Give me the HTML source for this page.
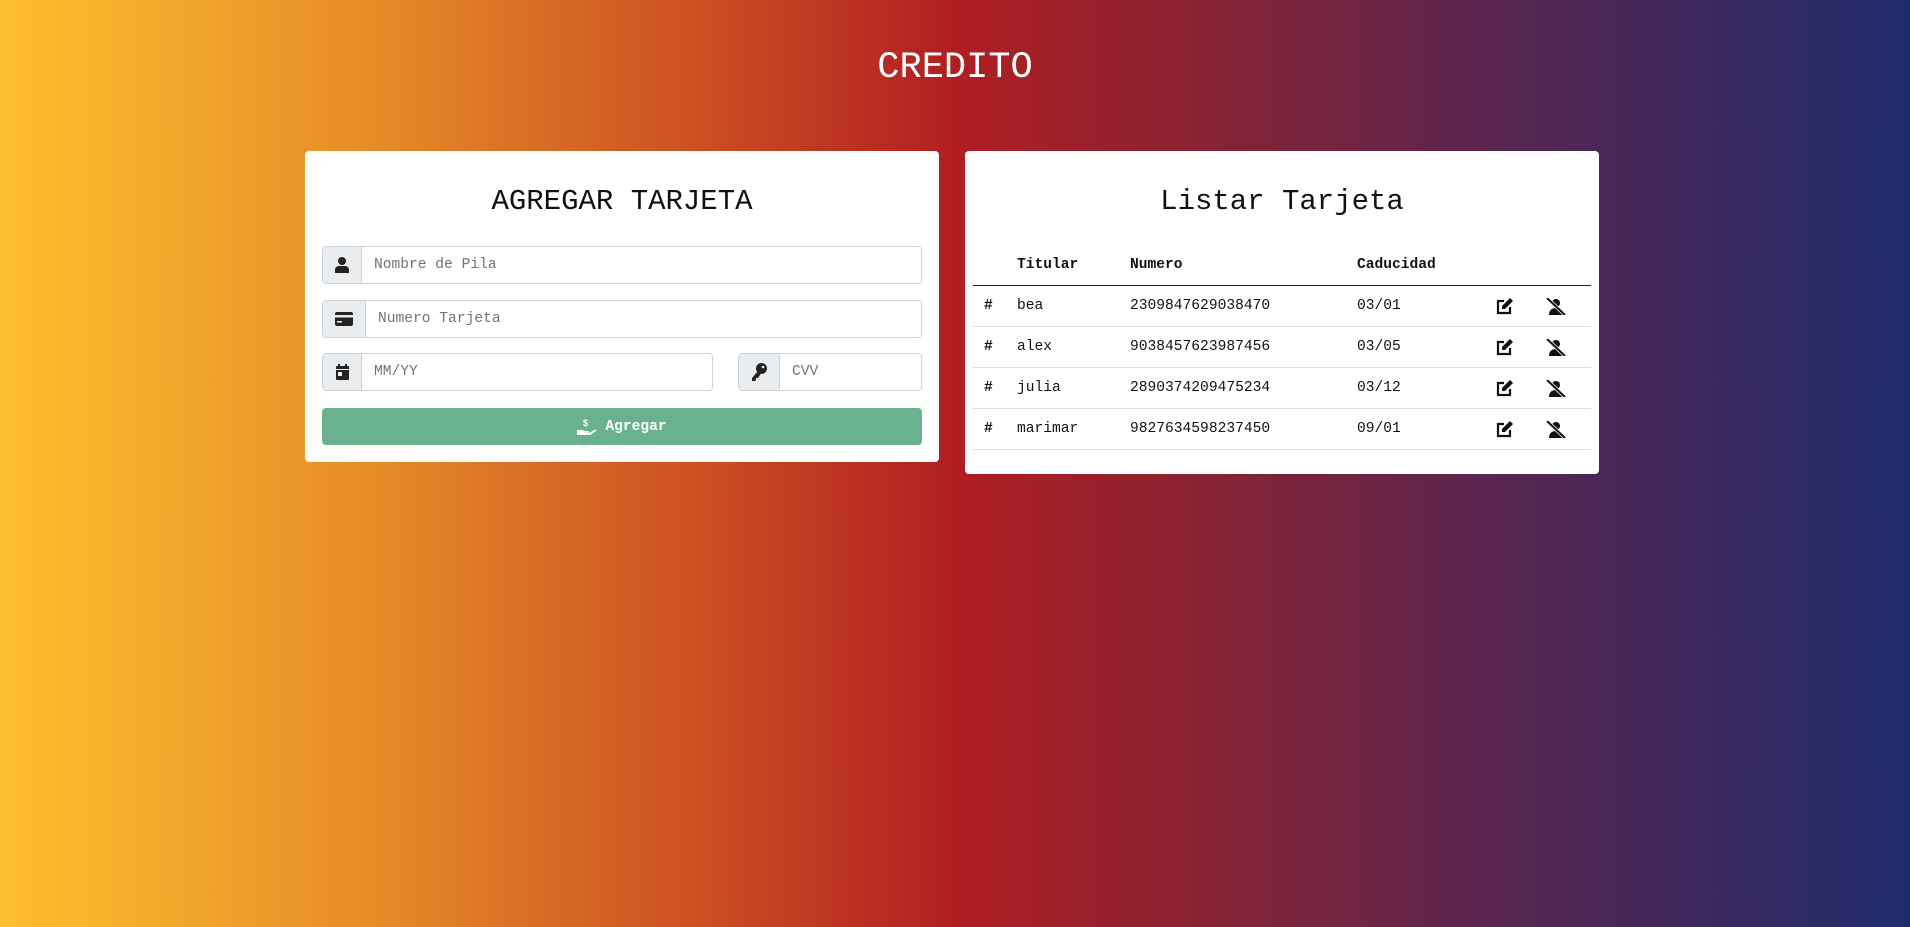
<!DOCTYPE html>
<html><head><style>
*{box-sizing:border-box;margin:0;padding:0}
body{width:1910px;height:927px;overflow:hidden;font-family:"Liberation Mono",monospace;background:linear-gradient(90deg,#fdbf2e 0%,#e58a28 20%,#c94a22 38%,#b01e22 50%,#8a2232 62%,#5a2550 78%,#1e2b6b 100%);position:relative}
h1{position:absolute;top:48px;left:0;width:1910px;text-align:center;color:#fff;font-weight:normal;font-size:37px;line-height:40px}
.card{position:absolute;background:#fff;border-radius:4px;top:151px}
.t{position:absolute;left:0;width:100%;text-align:center;font-size:29px;line-height:34px;color:#111;top:34px}
.grp{position:absolute;height:38px;border:1px solid #ced4da;border-radius:4px;display:flex;background:#fff;overflow:hidden}
.ad{width:39px;background:#e9ecef;border-right:1px solid #ced4da;display:flex;align-items:center;justify-content:center}
.ph{color:#6c757d;font-size:14.6px;line-height:36px;padding-left:12px}
.btn{position:absolute;left:17px;width:600px;top:257px;height:37px;background:#69b18f;border-radius:4px;color:#fff;font-size:14.6px;font-weight:bold;display:flex;align-items:center;justify-content:center;gap:8px}
.r{position:absolute;left:8px;width:618px;border-bottom:1px solid #ddd;height:41px;font-size:14.6px;color:#111}
.r span{position:absolute;top:12px}
.r svg{position:absolute;top:12px}
</style></head><body>
<h1>CREDITO</h1>
<div class="card" style="left:305px;width:634px;height:311px">
<div class="t">AGREGAR TARJETA</div>
<div class="grp" style="left:17px;top:95px;width:600px"><div class="ad"><svg width="14" height="16" viewBox="0 0 14 16"><circle cx="7" cy="4" r="4" fill="#222"/><path d="M0 16v-3a4 4 0 014-4h6a4 4 0 014 4v3z" fill="#222"/></svg></div><div class="ph">Nombre de Pila</div></div>
<div class="grp" style="left:17px;top:149px;width:600px"><div class="ad" style="width:43px"><svg width="18" height="14" viewBox="0 0 18 14"><rect width="18" height="14" rx="2" fill="#222"/><rect y="3" width="18" height="2.5" fill="#e9ecef"/><rect x="2" y="9" width="5" height="1.6" fill="#e9ecef"/></svg></div><div class="ph">Numero Tarjeta</div></div>
<div class="grp" style="left:17px;top:202px;width:391px"><div class="ad"><svg width="13" height="16" viewBox="0 0 13 16"><rect y="2" width="13" height="14" rx="1" fill="#222"/><rect x="2" width="2" height="3" fill="#222"/><rect x="9" width="2" height="3" fill="#222"/><rect y="5" width="13" height="1" fill="#e9ecef"/><rect x="2" y="8" width="4" height="4" fill="#e9ecef"/></svg></div><div class="ph">MM/YY</div></div>
<div class="grp" style="left:433px;top:202px;width:184px"><div class="ad" style="width:41px"><svg width="16" height="18" viewBox="0 0 16 18"><circle cx="10.5" cy="5.5" r="5.5" fill="#222"/><path d="M7 8L1 15v3h3l1-1v-2h2l4-6z" fill="#222"/><circle cx="12" cy="4" r="1.3" fill="#e9ecef"/></svg></div><div class="ph">CVV</div></div>
<div class="btn"><svg width="20" height="18" viewBox="0 0 20 18"><text x="6" y="8" font-size="9" font-weight="bold" fill="#fff" font-family="Liberation Sans">$</text><path d="M0 12h5l3 1h4v1.6H7l5 .4 6-3.5 1.5 1.2L13 17H0z" fill="#fff"/></svg>Agregar</div>
</div>
<div class="card" style="left:965px;width:634px;height:323px">
<div class="t">Listar Tarjeta</div>
<div class="r" style="top:102px;height:33px;border-bottom:1.5px solid #222;font-weight:bold"><span style="left:44px;top:4px">Titular</span><span style="left:157px;top:4px">Numero</span><span style="left:384px;top:4px">Caducidad</span></div>
<div class="r" style="top:135px"><span style="left:11px;font-weight:bold">#</span><span style="left:44px">bea</span><span style="left:157px">2309847629038470</span><span style="left:384px">03/01</span><svg style="left:523px" width="18" height="17" viewBox="0 0 18 17"><path d="M8 3H2v12h12V9" fill="none" stroke="#111" stroke-width="2.2"/><path d="M14 0l3 3-8 8H6V8z" fill="#111"/></svg><svg style="left:573px" width="20" height="17" viewBox="0 0 20 17"><circle cx="10" cy="5" r="4" fill="#111"/><path d="M3 17c0-5 3-7 7-7s7 2 7 7z" fill="#111"/><path d="M1 0l18 17" stroke="#fff" stroke-width="3.5"/><path d="M1 0l18 17" stroke="#111" stroke-width="2"/></svg></div>
<div class="r" style="top:176px"><span style="left:11px;font-weight:bold">#</span><span style="left:44px">alex</span><span style="left:157px">9038457623987456</span><span style="left:384px">03/05</span><svg style="left:523px" width="18" height="17" viewBox="0 0 18 17"><path d="M8 3H2v12h12V9" fill="none" stroke="#111" stroke-width="2.2"/><path d="M14 0l3 3-8 8H6V8z" fill="#111"/></svg><svg style="left:573px" width="20" height="17" viewBox="0 0 20 17"><circle cx="10" cy="5" r="4" fill="#111"/><path d="M3 17c0-5 3-7 7-7s7 2 7 7z" fill="#111"/><path d="M1 0l18 17" stroke="#fff" stroke-width="3.5"/><path d="M1 0l18 17" stroke="#111" stroke-width="2"/></svg></div>
<div class="r" style="top:217px"><span style="left:11px;font-weight:bold">#</span><span style="left:44px">julia</span><span style="left:157px">2890374209475234</span><span style="left:384px">03/12</span><svg style="left:523px" width="18" height="17" viewBox="0 0 18 17"><path d="M8 3H2v12h12V9" fill="none" stroke="#111" stroke-width="2.2"/><path d="M14 0l3 3-8 8H6V8z" fill="#111"/></svg><svg style="left:573px" width="20" height="17" viewBox="0 0 20 17"><circle cx="10" cy="5" r="4" fill="#111"/><path d="M3 17c0-5 3-7 7-7s7 2 7 7z" fill="#111"/><path d="M1 0l18 17" stroke="#fff" stroke-width="3.5"/><path d="M1 0l18 17" stroke="#111" stroke-width="2"/></svg></div>
<div class="r" style="top:258px"><span style="left:11px;font-weight:bold">#</span><span style="left:44px">marimar</span><span style="left:157px">9827634598237450</span><span style="left:384px">09/01</span><svg style="left:523px" width="18" height="17" viewBox="0 0 18 17"><path d="M8 3H2v12h12V9" fill="none" stroke="#111" stroke-width="2.2"/><path d="M14 0l3 3-8 8H6V8z" fill="#111"/></svg><svg style="left:573px" width="20" height="17" viewBox="0 0 20 17"><circle cx="10" cy="5" r="4" fill="#111"/><path d="M3 17c0-5 3-7 7-7s7 2 7 7z" fill="#111"/><path d="M1 0l18 17" stroke="#fff" stroke-width="3.5"/><path d="M1 0l18 17" stroke="#111" stroke-width="2"/></svg></div>
</div>
</body></html>
